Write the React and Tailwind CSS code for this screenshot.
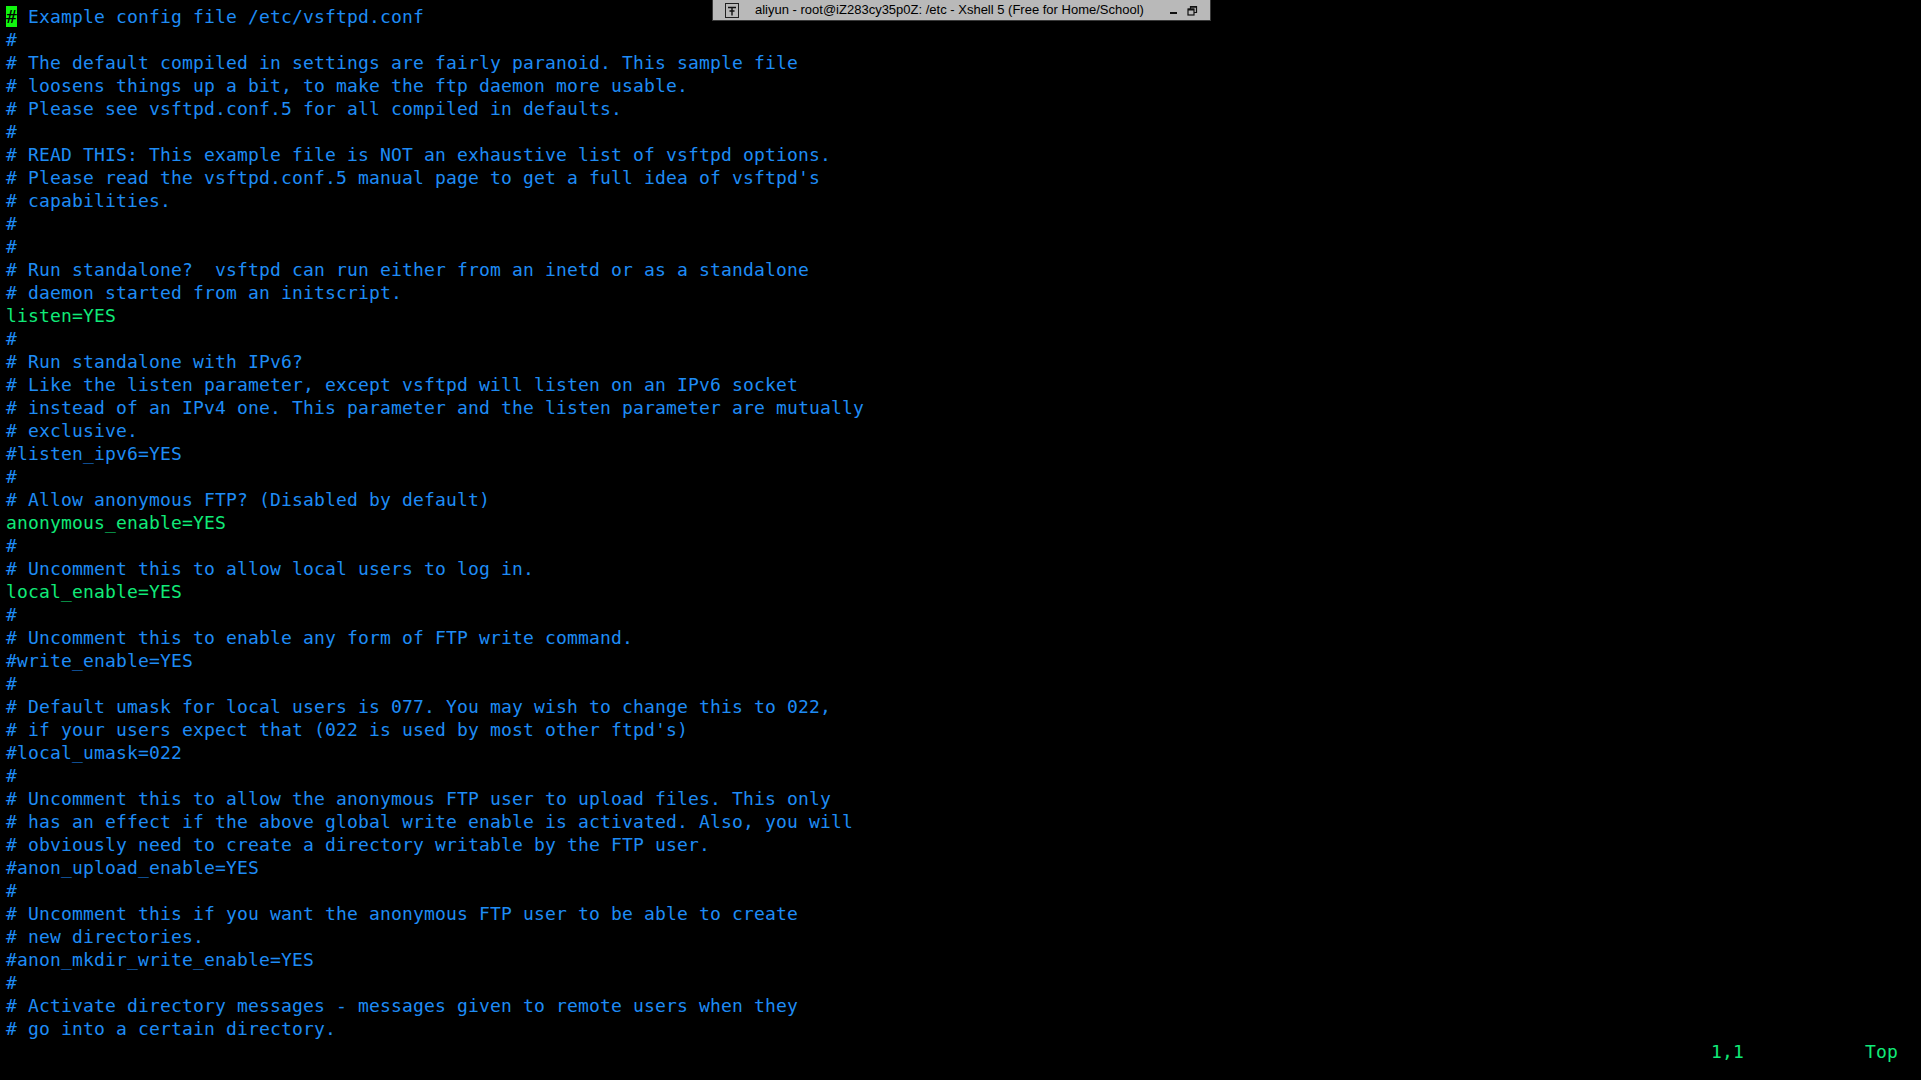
import { useMemo } from 'react';

const lines = [
  ['c', '# Example config file /etc/vsftpd.conf'],
  ['c', '#'],
  ['c', '# The default compiled in settings are fairly paranoid. This sample file'],
  ['c', '# loosens things up a bit, to make the ftp daemon more usable.'],
  ['c', '# Please see vsftpd.conf.5 for all compiled in defaults.'],
  ['c', '#'],
  ['c', '# READ THIS: This example file is NOT an exhaustive list of vsftpd options.'],
  ['c', "# Please read the vsftpd.conf.5 manual page to get a full idea of vsftpd's"],
  ['c', '# capabilities.'],
  ['c', '#'],
  ['c', '#'],
  ['c', '# Run standalone?  vsftpd can run either from an inetd or as a standalone'],
  ['c', '# daemon started from an initscript.'],
  ['s', 'listen=YES'],
  ['c', '#'],
  ['c', '# Run standalone with IPv6?'],
  ['c', '# Like the listen parameter, except vsftpd will listen on an IPv6 socket'],
  ['c', '# instead of an IPv4 one. This parameter and the listen parameter are mutually'],
  ['c', '# exclusive.'],
  ['c', '#listen_ipv6=YES'],
  ['c', '#'],
  ['c', '# Allow anonymous FTP? (Disabled by default)'],
  ['s', 'anonymous_enable=YES'],
  ['c', '#'],
  ['c', '# Uncomment this to allow local users to log in.'],
  ['s', 'local_enable=YES'],
  ['c', '#'],
  ['c', '# Uncomment this to enable any form of FTP write command.'],
  ['c', '#write_enable=YES'],
  ['c', '#'],
  ['c', '# Default umask for local users is 077. You may wish to change this to 022,'],
  ['c', "# if your users expect that (022 is used by most other ftpd's)"],
  ['c', '#local_umask=022'],
  ['c', '#'],
  ['c', '# Uncomment this to allow the anonymous FTP user to upload files. This only'],
  ['c', '# has an effect if the above global write enable is activated. Also, you will'],
  ['c', '# obviously need to create a directory writable by the FTP user.'],
  ['c', '#anon_upload_enable=YES'],
  ['c', '#'],
  ['c', '# Uncomment this if you want the anonymous FTP user to be able to create'],
  ['c', '# new directories.'],
  ['c', '#anon_mkdir_write_enable=YES'],
  ['c', '#'],
  ['c', '# Activate directory messages - messages given to remote users when they'],
  ['c', '# go into a certain directory.'],
];

function TitleBar() {
  return (
    <div className="absolute top-0 left-[712px] w-[499px] h-[21px] bg-[#b9b9b9] border-b border-l border-r border-[#3a3a3a] flex items-center font-['Liberation_Sans',Arial,sans-serif] text-[13px] text-black">
      <div className="ml-[12px] w-[14px] h-[15px] border border-[#202020] flex items-center justify-center">
        <svg width="10" height="11" viewBox="0 0 10 11">
          <path d="M1 2.5h8M2.5 6h5M5 2.5v8" stroke="#111" strokeWidth="1.4" fill="none" />
        </svg>
      </div>
      <span className="ml-[16px] whitespace-nowrap">aliyun - root@iZ283cy35p0Z: /etc - Xshell 5 (Free for Home/School)</span>
      <span className="ml-auto mr-[12px] flex items-center gap-[10px]">
        <span className="w-[7px] h-[2px] bg-[#111] mt-[5px]" />
        <svg width="11" height="11" viewBox="0 0 11 11">
          <rect x="1" y="4" width="6" height="6" stroke="#111" strokeWidth="1.2" fill="none" />
          <path d="M3.5 4V1.5h6v6H7" stroke="#111" strokeWidth="1.2" fill="none" />
          <path d="M1 4.6h6M3.5 2h6" stroke="#111" strokeWidth="1.6" />
        </svg>
      </span>
    </div>
  );
}

export default function App() {
  const status = useMemo(() => ' '.repeat(155) + '1,1' + ' '.repeat(11) + 'Top', []);

  return (
    <div className="relative w-[1921px] h-[1080px] bg-black overflow-hidden">
      <div className="pt-[5px] pl-[6px] font-['DejaVu_Sans_Mono',monospace] text-[18px] tracking-[0.163px] leading-[23px] whitespace-pre">
        {lines.map(([kind, text], i) => (
          <div key={i} className={kind === 'c' ? 'text-[#1e8cf5]' : 'text-[#10ea78]'}>
            {i === 0 ? (
              <>
                <span className="bg-[#11f50f] text-black">#</span>
                {text.slice(1)}
              </>
            ) : (
              text
            )}
          </div>
        ))}
        <div className="text-[#10ea78]">{status}</div>
      </div>
      <TitleBar />
    </div>
  );
}
